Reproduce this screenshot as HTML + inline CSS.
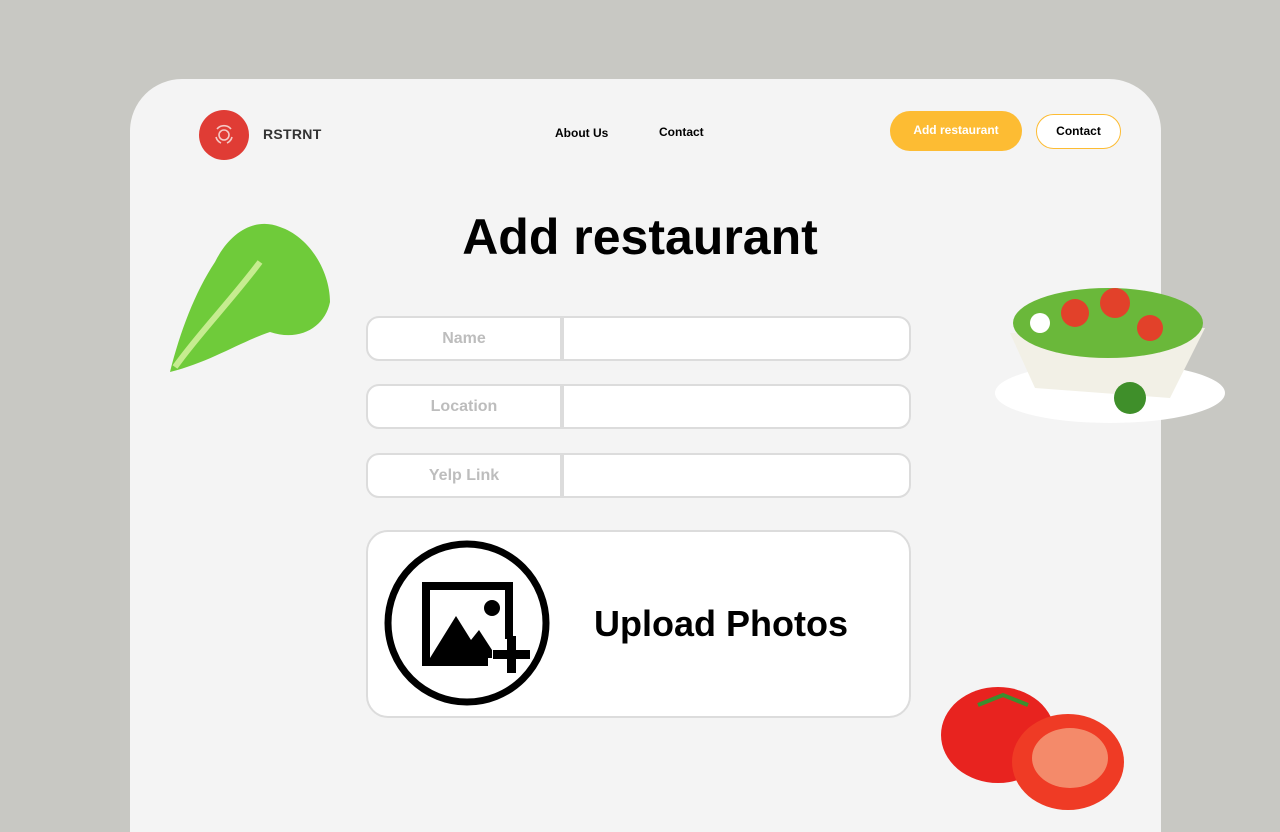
<!DOCTYPE html>
<html style="width:1280px;height:832px;overflow:hidden"><head><meta charset="utf-8"><style>
*{margin:0;padding:0;box-sizing:border-box}
body{width:1280px;height:832px;background:#c8c8c3;position:relative;overflow:hidden;font-family:"Liberation Sans",sans-serif}
.card{position:absolute;left:130px;top:79px;width:1031px;height:753px;background:#f4f4f4;border-radius:52px 52px 0 0}
.abs{position:absolute}
.field{position:absolute;left:366px;width:545px;height:45px;border:2px solid #dcdcdc;border-radius:13px;background:#fff}
.field .lab{position:absolute;left:0;top:0;width:196px;height:41px;border-right:4px solid #dcdcdc;color:#bdbdbd;font-weight:bold;font-size:16px;line-height:41px;text-align:center}
</style></head><body>
<div class="card"></div>
<div class="abs" style="left:199px;top:110px;width:50px;height:50px;border-radius:50%;background:#e03c35"></div>
<svg class="abs" style="left:199px;top:110px" width="50" height="50"><g fill="none" stroke="#f5c9c5" stroke-width="1.6"><circle cx="25" cy="25" r="5"/><path d="M18 19a9 9 0 0 1 14 0M33 27a9 9 0 0 1-5 6M17 27a9 9 0 0 0 5 6"/></g></svg>
<div class="abs" style="left:263px;top:126px;font-size:14px;font-weight:bold;color:#333;letter-spacing:.3px">RSTRNT</div>
<div class="abs" style="left:555px;top:126px;font-size:12px;font-weight:bold">About Us</div>
<div class="abs" style="left:659px;top:125px;font-size:12px;font-weight:bold">Contact</div>
<div class="abs" style="left:890px;top:111px;width:132px;height:40px;border-radius:20px;background:#fdbc33;color:#fff;font-size:12px;font-weight:bold;text-align:center;line-height:38px">Add restaurant</div>
<div class="abs" style="left:1036px;top:114px;width:85px;height:35px;border-radius:18px;background:#fff;border:1px solid #fdbc33;font-size:12px;font-weight:bold;text-align:center;line-height:33px">Contact</div>
<div class="abs" style="left:0;width:1280px;top:208px;text-align:center;font-size:50px;font-weight:bold;color:#000">Add restaurant</div>
<div class="field" style="top:316px"><div class="lab">Name</div></div>
<div class="field" style="top:384px"><div class="lab">Location</div></div>
<div class="field" style="top:453px"><div class="lab">Yelp Link</div></div>
<div class="abs" style="left:366px;top:530px;width:545px;height:188px;border:2px solid #dcdcdc;border-radius:22px;background:#fff"></div>
<svg class="abs" style="left:380px;top:536px" width="176" height="176">
<circle cx="87" cy="87" r="79" fill="none" stroke="#000" stroke-width="7"/>
<path d="M42 46h91v57h-8V54H50v68h58v8H42z" fill="#000"/>
<path d="M50 122l26-42 15 24 8-10 13 20v8z" fill="#000"/>
<circle cx="112" cy="72" r="8" fill="#000"/>
<path d="M127 100h9v14h14v9h-14v14h-9v-14h-14v-9h14z" fill="#000"/>
</svg>
<div class="abs" style="left:594px;top:603px;font-size:36px;font-weight:bold">Upload Photos</div>
<svg class="abs" style="left:160px;top:212px" width="175" height="165">
<path d="M10 160C20 120 35 80 55 50 70 20 95 5 120 15 150 25 170 60 170 90 165 115 140 130 110 120 80 130 50 150 10 160z" fill="#6fcb3a"/>
<path d="M15 155C40 120 70 90 100 50" stroke="#c6ec90" stroke-width="6" fill="none"/>
</svg>
<svg class="abs" style="left:990px;top:268px" width="250" height="172">
<ellipse cx="120" cy="125" rx="115" ry="30" fill="#fff"/>
<path d="M20 65L45 120 180 130 215 60z" fill="#f2f0e6"/>
<ellipse cx="118" cy="55" rx="95" ry="35" fill="#6ab83a"/>
<circle cx="85" cy="45" r="14" fill="#e2412a"/><circle cx="125" cy="35" r="15" fill="#e2412a"/><circle cx="160" cy="60" r="13" fill="#e2412a"/><circle cx="50" cy="55" r="10" fill="#fff"/>
<circle cx="140" cy="130" r="16" fill="#3f8f2a"/>
</svg>
<svg class="abs" style="left:938px;top:680px" width="195" height="135">
<ellipse cx="60" cy="55" rx="57" ry="48" fill="#e8231f"/>
<path d="M40 25l25-10 25 10" stroke="#3a8f2e" stroke-width="4" fill="none"/>
<ellipse cx="130" cy="82" rx="56" ry="48" fill="#ef3b25"/>
<ellipse cx="132" cy="78" rx="38" ry="30" fill="#f48a6a"/>
</svg>
</body></html>
